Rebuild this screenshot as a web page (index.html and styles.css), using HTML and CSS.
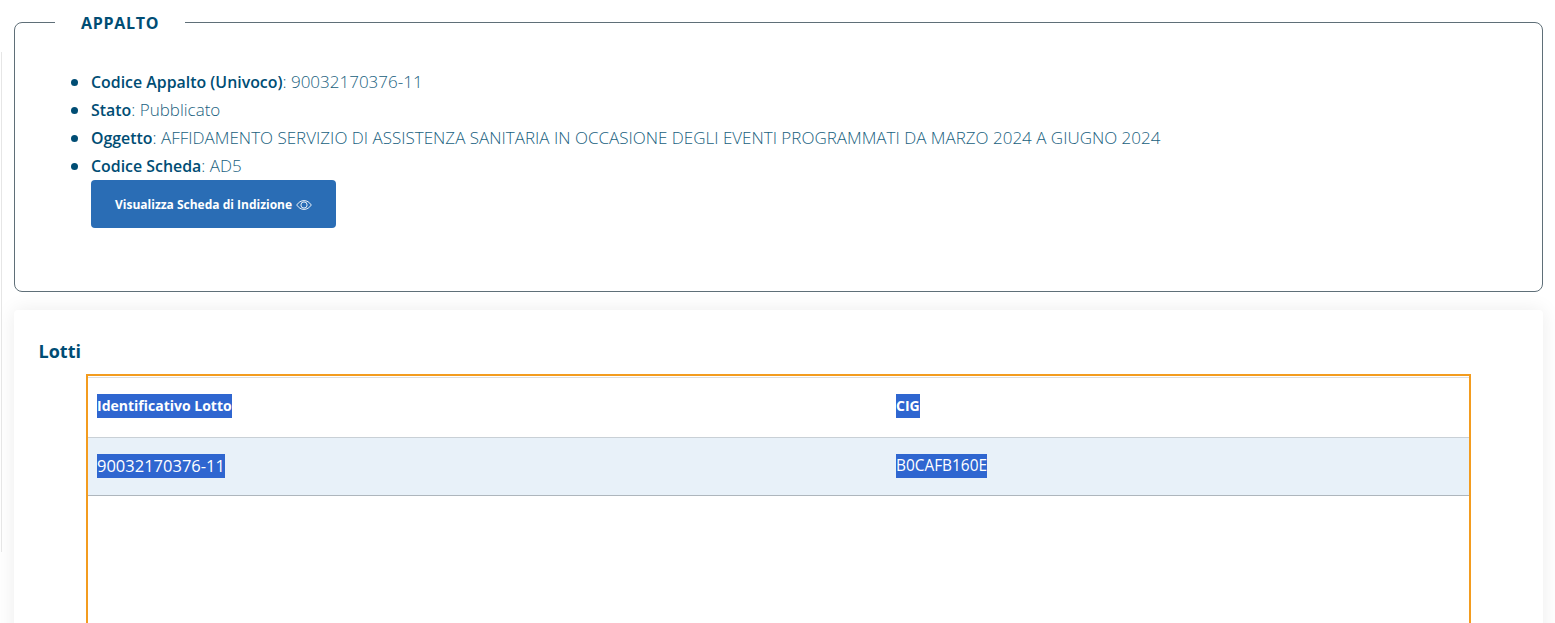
FILE: index.html
```html
<!DOCTYPE html>
<html lang="it">
<head>
<meta charset="utf-8">
<title>Appalto</title>
<link rel="stylesheet" href="styles.css">
</head>
<body>
<div class="sliver"></div>
<main class="page">
  <fieldset class="box">
    <legend class="box-title">APPALTO</legend>
    <ul class="facts">
      <li><b>Codice Appalto (Univoco)</b>: 90032170376-11</li>
      <li><b>Stato</b>: Pubblicato</li>
      <li><b>Oggetto</b>: AFFIDAMENTO SERVIZIO DI ASSISTENZA SANITARIA IN OCCASIONE DEGLI EVENTI PROGRAMMATI DA MARZO 2024 A GIUGNO 2024</li>
      <li><b>Codice Scheda</b>: AD5
        <a class="btn" href="#">Visualizza Scheda di Indizione
          <svg class="eye" viewBox="0 0 16 16" width="16" height="16" aria-hidden="true"><path d="M.7 8C2.600 5.200 5.100 3.600 8 3.600s5.400 1.600 7.300 4.400c-1.900 2.800-4.400 4.400-7.300 4.400S2.600 10.800.7 8z" fill="none" stroke="#fff" stroke-width=".9"/><circle cx="8" cy="8" r="3.100" fill="none" stroke="#fff" stroke-width=".9"/></svg>
        </a>
      </li>
    </ul>
  </fieldset>
  <section class="card">
    <h2 class="card-title">Lotti</h2>
    <div class="frame">
      <table class="grid">
        <thead>
          <tr><th class="col-a"><span class="sel">Identificativo Lotto</span></th><th><span class="sel">CIG</span></th></tr>
        </thead>
        <tbody>
          <tr><td class="num"><span class="sel">90032170376-11</span></td><td class="code"><span class="sel">B0CAFB160E</span></td></tr>
        </tbody>
      </table>
    </div>
  </section>
</main>
</body>
</html>
```
FILE: styles.css
```css
html, body { margin: 0; padding: 0; background: #fff; }
body { font-family: "Open Sans", "Noto Sans", sans-serif; color: #004d74; }
.sliver { position: absolute; left: 1px; top: 52px; width: 1px; height: 500px; background: #e6e6e6; }
.page { height: 623px; overflow: hidden; padding: 0 12px 0 14px; box-sizing: border-box; }
.box { margin: 13px 0 0; padding: 36px 0 0 40px; border: 1px solid #5f6f78; border-radius: 8px; height: 279px; box-sizing: border-box; min-width: 0; }
.box-title { margin-left: 0; padding: 2px 26px 0; font-size: 16px; font-weight: 700; letter-spacing: .7px; line-height: 17px; color: #004d74; }
.facts { margin: 0; padding: 0 0 0 36px; list-style: none; font-size: 17px; line-height: 28px; font-weight: 300; color: #205f80; }
.facts li { position: relative; }
.facts li::before { content: ""; position: absolute; left: -20px; top: 11px; width: 7px; height: 7px; border-radius: 50%; background: #004d74; }
.facts b { font-size: 15.900px; font-weight: 600; color: #004d74; }
.btn { display: flex; align-items: center; gap: 4px; width: 245px; height: 48px; box-sizing: border-box; padding: 2px 0 0 24px; background: #2a6db5; border-radius: 4px; color: #fff; font-size: 12px; font-weight: 700; text-decoration: none; line-height: 1; }
.eye { flex: none; }
.card { margin-top: 18px; height: 330px; padding: 27px 25px 0 24.500px; background: #fff; box-shadow: 0 0 20px rgba(0,0,0,.08); border-radius: 4px; }
.card-title { margin: 0 0 9px; font-size: 18px; line-height: 28px; font-weight: 700; color: #004d74; }
.frame { margin-left: 47.500px; width: 1385px; height: 300px; box-sizing: border-box; border: 2px solid #f39c1f; padding-top: 1px; }
.grid { width: 100%; border-collapse: collapse; table-layout: fixed; font-size: 15px; line-height: 24px; color: #fff; }
.grid th, .grid td { text-align: left; vertical-align: top; padding: 16px 0 0 9px; }
.col-a { width: 799px; }
.grid th { height: 60px; box-sizing: border-box; font-weight: 700; border-top: 1px solid #dedede; border-bottom: 1px solid #c9d0d6; font-size: 14px; }
.grid td { height: 58px; box-sizing: border-box; background: #e8f1f9; border-bottom: 1px solid #aeb6bd; }
.grid .num { font-size: 16.500px; }
.grid .code { font-size: 15.400px; }
.sel { background: #2f66d0; display: block; width: fit-content; line-height: 24px; color: #fff; }
```
